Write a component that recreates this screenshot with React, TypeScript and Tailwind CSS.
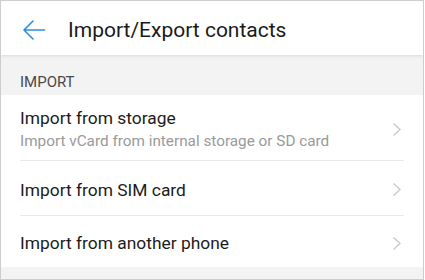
import React from "react";

function Chevron() {
  return (
    <svg width="10" height="15" viewBox="0 0 10 15" className="shrink-0">
      <path d="M1.5 1.5 L8 7.5 L1.5 13.5" fill="none" stroke="#c8c8c8" strokeWidth="1.3" />
    </svg>
  );
}

function Row({ title, sub, h, divider }: { title: string; sub?: string; h: string; divider: boolean }) {
  return (
    <div className="flex flex-col px-[19px]">
      <div className={`flex items-center justify-between pt-[3px] ${h}`}>
        <div className="flex flex-col">
          <span className="text-[17.4px] leading-[22px] text-[#1c1c1c]">{title}</span>
          {sub && <span className="text-[15.3px] leading-[22px] mt-[1px] text-[#9a9a9a]">{sub}</span>}
        </div>
        <div className="mr-[2px]">
          <Chevron />
        </div>
      </div>
      {divider && <div className="h-px bg-[#e9e9e9]" />}
    </div>
  );
}

export default function App() {
  return (
    <div
      className="w-[424px] h-[280px] border border-[#cdcdcd] bg-[#f3f3f3] flex flex-col overflow-hidden"
      style={{ fontFamily: "Roboto, 'Noto Sans', sans-serif" }}
    >
      <div className="h-[54px] shrink-0 bg-white flex items-center pt-[4px] relative z-10 shadow-[0_1px_3px_rgba(0,0,0,0.10)]">
        <svg width="24" height="22" viewBox="0 0 24 22" className="ml-[21px]">
          <path d="M22.5 11 H2.5 M11 2 L2 11 L11 20" fill="none" stroke="#2b8fe0" strokeWidth="1.6" strokeLinecap="round" strokeLinejoin="round" />
        </svg>
        <span className="ml-[22px] text-[21px] text-[#1a1a1a] leading-none">Import/Export contacts</span>
      </div>
      <div className="h-[40px] shrink-0 flex items-center pl-[19px] pt-[15px] text-[15px] text-[#4a4a4a]">IMPORT</div>
      <div className="bg-white flex flex-col shrink-0">
        <Row title="Import from storage" sub="Import vCard from internal storage or SD card" h="h-[65px]" divider />
        <Row title="Import from SIM card" h="h-[54px]" divider />
        <Row title="Import from another phone" h="h-[51px]" divider={false} />
      </div>
    </div>
  );
}
